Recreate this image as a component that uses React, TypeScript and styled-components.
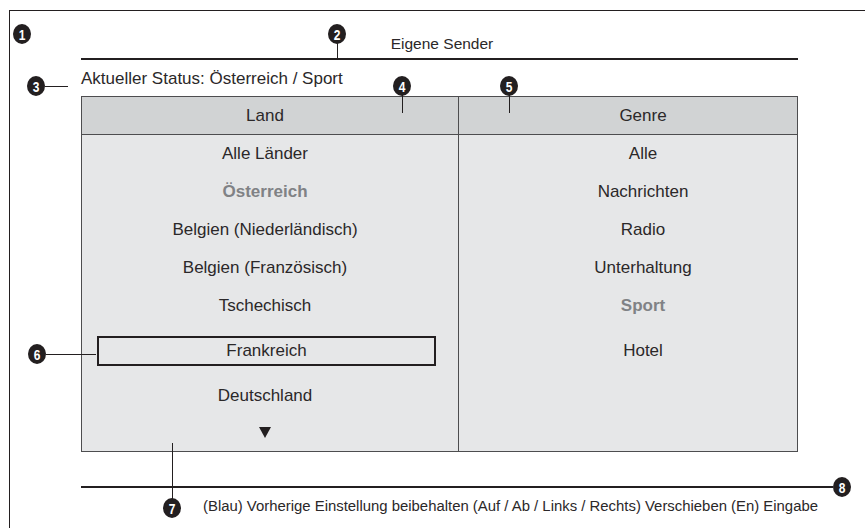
import React from 'react';
import styled, { createGlobalStyle } from 'styled-components';

const ink = '#231f20';
const textInk = '#2b2829';

const GlobalStyle = createGlobalStyle`
  html, body {
    margin: 0;
    padding: 0;
    background: #ffffff;
    overflow: hidden;
  }
  body {
    font-family: "Liberation Sans", Arial, sans-serif;
    color: ${textInk};
  }
`;

const Page = styled.div`
  position: relative;
  width: 865px;
  height: 528px;
  overflow: hidden;
`;

// outer drawing frame, open towards right and bottom (cropped)
const Frame = styled.div`
  margin: 10px 0 0 9px;
  height: 600px;
  border-top: 1px solid ${ink};
  border-left: 1px solid ${ink};
`;

const Screen = styled.div`
  margin-left: 71px;
  width: 752px;
  display: flex;
  flex-direction: column;
`;

const Title = styled.div`
  width: 717px;
  height: 49px;
  box-sizing: border-box;
  display: flex;
  align-items: flex-end;
  justify-content: center;
  padding: 0 0 4px 5px;
  font-size: 15.5px;
  line-height: 20px;
  border-bottom: 2px solid ${ink};
`;

const Status = styled.div`
  margin-top: 9px;
  font-size: 17px;
  line-height: 20px;
`;

const Table = styled.div`
  margin-top: 7px;
  width: 717px;
  box-sizing: border-box;
  display: grid;
  grid-template-columns: 377px 1fr;
  border: 1px solid #4d4d4f;
  background: #e6e7e8;
`;

const Column = styled.div<{ $divider?: boolean }>`
  display: flex;
  flex-direction: column;
  border-right: ${(p) => (p.$divider ? '1px solid #4d4d4f' : 'none')};
`;

const Header = styled.div<{ $padL: number; $padR: number }>`
  height: 38px;
  box-sizing: border-box;
  display: flex;
  align-items: center;
  justify-content: center;
  padding: 1px ${(p) => p.$padR}px 0 ${(p) => p.$padL}px;
  background: #d1d3d4;
  border-bottom: 1px solid #4d4d4f;
  font-size: 17px;
`;

const Item = styled.div<{ $padL: number; $padR: number; $h: number; $muted?: boolean }>`
  height: ${(p) => p.$h}px;
  box-sizing: border-box;
  display: flex;
  align-items: center;
  justify-content: center;
  padding: 0 ${(p) => p.$padR}px 0 ${(p) => p.$padL}px;
  font-size: 17px;
  font-weight: ${(p) => (p.$muted ? 700 : 400)};
  color: ${(p) => (p.$muted ? '#808285' : textInk)};
`;

const SelectBox = styled.div`
  height: 30px;
  width: 340px;
  margin: 0 22px 0 15px;
  box-sizing: border-box;
  display: flex;
  align-items: center;
  justify-content: center;
  border: 2px solid ${ink};
  font-size: 17px;
`;

const DownArrow = styled.div`
  width: 0;
  height: 0;
  border-left: 6px solid transparent;
  border-right: 6px solid transparent;
  border-top: 11px solid ${ink};
`;

const Footer = styled.div`
  margin-top: 34px;
  border-top: 2px solid ${ink};
  display: flex;
  justify-content: flex-end;
  padding: 8px 15px 0 0;
  font-size: 14.9px;
  line-height: 20px;
`;

const Badge = styled.div`
  position: absolute;
  width: 18px;
  height: 20px;
  margin: -10px 0 0 -9px;
  border-radius: 50%;
  background: ${ink};
  color: #ffffff;
  display: flex;
  align-items: center;
  justify-content: center;
  font-size: 15px;
  font-weight: 700;
  line-height: 1;
  z-index: 2;

  span {
    display: inline-block;
    transform: scaleX(0.8);
  }
`;

const Leader = styled.div<{ $vertical?: boolean }>`
  position: absolute;
  background: ${ink};
  z-index: 1;
  ${(p) => (p.$vertical ? 'width: 1.5px;' : 'height: 1.5px;')}
`;

type Row = { land: string; genre: string; h: number; box?: boolean; arrow?: boolean; mutedL?: boolean; mutedR?: boolean };

const rows: Row[] = [
  { land: 'Alle Länder', genre: 'Alle', h: 38 },
  { land: 'Österreich', genre: 'Nachrichten', h: 38, mutedL: true },
  { land: 'Belgien (Niederländisch)', genre: 'Radio', h: 38 },
  { land: 'Belgien (Französisch)', genre: 'Unterhaltung', h: 38 },
  { land: 'Tschechisch', genre: 'Sport', h: 38, mutedR: true },
  { land: 'Frankreich', genre: 'Hotel', h: 52, box: true },
  { land: 'Deutschland', genre: '', h: 37 },
  { land: '', genre: '', h: 37, arrow: true },
];

const badges = [
  { n: 1, x: 22, y: 34 },
  { n: 2, x: 337, y: 34 },
  { n: 3, x: 36, y: 86 },
  { n: 4, x: 402, y: 86 },
  { n: 5, x: 509, y: 86 },
  { n: 6, x: 37, y: 354 },
  { n: 7, x: 172, y: 508 },
  { n: 8, x: 842, y: 487 },
];

// leader lines: [left, top, length, vertical]
const leaders: [number, number, number, boolean][] = [
  [336.5, 42, 17, true],
  [45, 85.5, 23, false],
  [401.5, 94, 19, true],
  [508.5, 94, 19, true],
  [46, 353.5, 50, false],
  [171.5, 443, 58, true],
];

const App: React.FC = () => {
  return (
    <>
      <GlobalStyle />
      <Page>
        <Frame>
          <Screen>
            <Title>Eigene Sender</Title>
            <Status>Aktueller Status: Österreich / Sport</Status>
            <Table>
              <Column $divider>
                <Header $padL={0} $padR={10}>Land</Header>
                {rows.map((r, i) => (
                  <Item key={i} $padL={0} $padR={r.box ? 0 : 10} $h={r.h} $muted={r.mutedL}>
                    {r.arrow ? <DownArrow /> : r.box ? <SelectBox>{r.land}</SelectBox> : r.land}
                  </Item>
                ))}
              </Column>
              <Column>
                <Header $padL={30} $padR={0}>Genre</Header>
                {rows.map((r, i) => (
                  <Item key={i} $padL={30} $padR={0} $h={r.h} $muted={r.mutedR}>
                    {r.genre}
                  </Item>
                ))}
              </Column>
            </Table>
            <Footer>
              (Blau) Vorherige Einstellung beibehalten (Auf / Ab / Links / Rechts) Verschieben (En) Eingabe
            </Footer>
          </Screen>
        </Frame>
        {leaders.map(([x, y, len, v], i) => (
          <Leader
            key={i}
            $vertical={v}
            style={v ? { left: x, top: y, height: len } : { left: x, top: y, width: len }}
          />
        ))}
        {badges.map((b) => (
          <Badge key={b.n} style={{ left: b.x, top: b.y }}>
            <span>{b.n}</span>
          </Badge>
        ))}
      </Page>
    </>
  );
};

export default App;
